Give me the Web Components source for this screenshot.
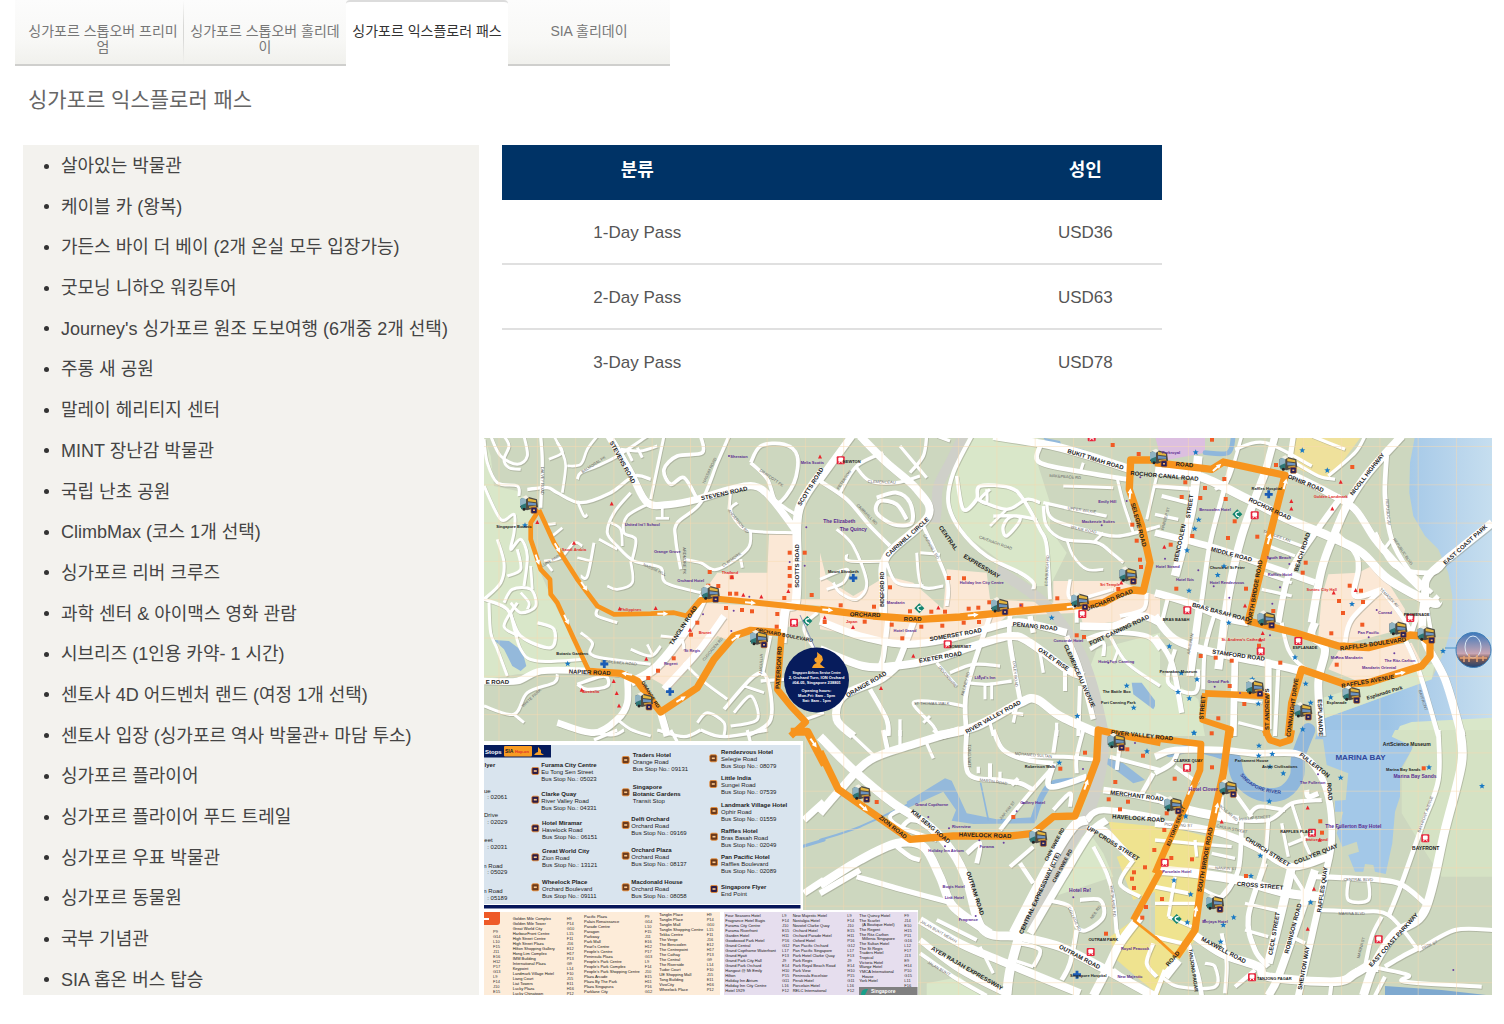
<!DOCTYPE html>
<html lang="ko">
<head>
<meta charset="utf-8">
<meta name="viewport" content="width=device-width, initial-scale=1">
<title>싱가포르 익스플로러 패스</title>
<style>
body { margin: 0; background: #fff; color: #444; font-family: "Liberation Sans", "Noto Sans CJK KR", sans-serif; }
</style>
</head>
<body>
<explorer-page></explorer-page>

<script>
const define = (name, html, init) => {
  const template = document.createElement('template');
  template.innerHTML = html;
  customElements.define(name, class extends HTMLElement {
    constructor() {
      super();
      this.attachShadow({ mode: 'open' }).append(template.content.cloneNode(true));
    }
    connectedCallback() { if (init) init(this.shadowRoot, this); }
  });
};

/* ---------- tabs ---------- */
define('tab-link', `
<style>
:host { display: block; flex: 0 0 162px; box-sizing: border-box; border-bottom: 2px solid #cfcfcd; }
:host([divided]) { background: linear-gradient(#0000, #d8d8d6 40%, #d8d8d6 60%, #0000) right / 1px 100% no-repeat; }
:host([current]) { background: #fff; border-top: 2px solid #dcdcdc; border-bottom-color: #fff; border-radius: 4px 4px 0 0; }
a { display: block; padding: 23px 5px 0; font-size: 14px; line-height: 16px; color: #777; text-align: center; text-decoration: none; }
:host([current]) a { color: #333; padding-top: 21px; }
</style>
<a href="#"><slot></slot></a>`, (root, host) => {
  if (host.hasAttribute('current')) root.querySelector('a').setAttribute('aria-current', 'page');
});

define('tab-strip', `
<style>
:host { display: block; padding-left: 15px; }
nav { display: flex; width: fit-content; height: 66px; background: linear-gradient(#fcfcfc, #f8f8f6 60%, #f0f0ec); }
nav::before { content: ""; flex: 0 0 7px; box-sizing: border-box; border-bottom: 2px solid #cfcfcd; }
</style>
<nav aria-label="패키지"><slot></slot></nav>`);

/* ---------- attraction list ---------- */
define('attraction-list', `
<style>
:host { display: block; background: #f3f2ee; }
ul { display: flex; flex-direction: column; justify-content: space-between; box-sizing: border-box; height: 100%; margin: 0; padding: 8px 0 2px 38px; list-style: none; }
li { display: flex; align-items: center; font-size: 18px; line-height: 26px; color: #444; }
li::before { content: ""; width: 5px; height: 5px; border-radius: 50%; background: #333; margin: 0 12px 0 -17px; }
</style>
<ul></ul>`, root => {
  const items = ['살아있는 박물관', '케이블 카 (왕복)', '가든스 바이 더 베이 (2개 온실 모두 입장가능)', '굿모닝 니하오 워킹투어',
    "Journey's 싱가포르 원조 도보여행 (6개중 2개 선택)", '주롱 새 공원', '말레이 헤리티지 센터', 'MINT 장난감 박물관', '국립 난초 공원',
    'ClimbMax (코스 1개 선택)', '싱가포르 리버 크루즈', '과학 센터 & 아이맥스 영화 관람', '시브리즈 (1인용 카약- 1 시간)',
    '센토사 4D 어드벤처 랜드 (여정 1개 선택)', '센토사 입장 (싱가포르 역사 박물관+ 마담 투소)', '싱가포르 플라이어',
    '싱가포르 플라이어 푸드 트레일', '싱가포르 우표 박물관', '싱가포르 동물원', '국부 기념관', 'SIA 홉온 버스 탑승'];
  root.querySelector('ul').replaceChildren(...items.map(t => {
    const li = document.createElement('li');
    li.textContent = t;
    return li;
  }));
});

/* ---------- price table ---------- */
define('price-table', `
<style>
:host { display: block; max-width: 660px; }
table { width: 100%; border-collapse: separate; border-spacing: 0; table-layout: fixed; text-align: center; font-size: 17px; color: #555; }
th, td { box-sizing: border-box; padding: 0; }
th { height: 55px; padding-bottom: 9px; background: #003366; color: #fff; font-size: 18px; }
td { height: 65px; padding-top: 2px; border-bottom: 2px solid #e0e0e0; }
tr:last-child td { border-bottom-color: transparent; }
th:first-child { width: 41%; }
th:last-child, td:last-child { padding-left: 236px; }
</style>
<table>
<thead><tr><th scope="col">분류</th><th scope="col">성인</th></tr></thead>
<tbody>
<tr><td>1-Day Pass</td><td>USD36</td></tr>
<tr><td>2-Day Pass</td><td>USD63</td></tr>
<tr><td>3-Day Pass</td><td>USD78</td></tr>
</tbody>
</table>`);

/* ---------- city map ---------- */
/* Each sheet is surveyed at three units per map pixel, from its own origin. */
const SHEETS = { A: [484, 436], B: [820, 436], C: [1155, 436], D: [484, 730], E: [820, 730], F: [1155, 730] };
const place = (s, x, y) => [SHEETS[s][0] + x / 3, SHEETS[s][1] + y / 3];
const r1 = n => Math.round(n * 10) / 10;
const points = (s, str) => str.trim().split(/\s+/).map(p => place(s, ...p.split(',').map(Number)));
const line = pts => 'M' + pts.map(p => p.map(r1).join(',')).join('L');
const curve = pts => {
  let d = 'M' + pts[0].map(r1).join(',');
  for (let i = 0; i < pts.length - 1; i++) {
    const a = pts[i - 1] || pts[i], b = pts[i], c = pts[i + 1], e = pts[i + 2] || c;
    d += 'C' + [b[0] + (c[0] - a[0]) / 6, b[1] + (c[1] - a[1]) / 6, c[0] - (e[0] - b[0]) / 6, c[1] - (e[1] - b[1]) / 6, c[0], c[1]].map(r1).join(' ');
  }
  return d;
};

const AREAS = [
  ['A', '#d9e7c9', '0,0 20,60 30,150 100,165 160,225 135,290 165,400 200,480 240,560 300,650 320,700 100,715 0,730'],
  ['A', '#94b9db', '30,612 75,615 115,645 127,690 110,705 85,690 60,640'],
  ['A', '#fbe8d6', '855,295 930,295 945,490 1020,490 1020,510 650,480 700,410 850,410'],
  ['A', '#fbe8d6', '650,500 1020,520 900,580 790,580 740,615 700,600 560,760 490,720 560,640'],
  ['B', '#d9e7c9', '430,0 655,0 655,90 690,200 690,280 740,350 690,450 640,450 560,390 440,300 380,200 400,120'],
  ['B', '#d9e7c9', '830,640 1020,590 1020,900 850,900 800,720'],
  ['B', '#fbe8d6', '0,480 0,350 20,430 100,480 200,420 280,440 370,520 380,400 500,410 510,490 700,500 700,435 900,435 980,470 1020,480 1020,540 860,560 790,570 780,530 560,540 490,600 270,620 0,580'],
  ['B', '#94b9db', '935,740 965,740 1010,800 1000,820 940,775'],
  ['B', '#94b9db', '670,5 720,15 725,30 680,20'],
  ['B', '#94b9db', '750,30 795,42 790,55 745,42'],
  ['C', 'url(#sea)', '780,0 765,80 763,170 775,240 810,300 850,340 880,410 892,480 892,560 870,640 830,730 500,850 480,910 800,910 1012,850 1012,0'],
  ['C', '#efe19c', '425,0 620,0 560,80 520,130 400,90'],
  ['C', '#dcbfe0', '0,0 150,0 150,50 20,75'],
  ['C', '#fbe8d6', '520,415 610,410 650,390 700,440 750,520 740,580 570,625 490,600 500,480'],
  ['C', '#fbe8d6', '550,645 770,620 800,680 620,740 520,700'],
  ['C', '#d9e7c9', '0,700 130,790 150,900 0,900'],
  ['C', '#d9e7c9', '490,790 840,680 830,730 500,850'],
  ['C', '#d9e7c9', '720,900 735,870 770,858 1012,845 1012,900'],
  ['F', '#a3c8e8', '500,0 515,105 580,130 572,210 540,212 540,245 565,245 545,310 562,350 605,335 612,365 580,375 600,425 625,425 630,402 655,405 660,425 692,432 712,340 720,245 735,200 735,120 770,60 775,30 710,20 720,0'],
  ['F', '#d5e2c4', '720,0 1012,0 1012,440 860,440 820,380 740,250 740,120 775,50 710,20'],
  ['F', '#efe38f', '0,290 80,300 160,320 150,400 130,620 70,690 0,797'],
  ['E', '#efe38f', '865,275 1020,290 1020,480 940,510 890,380 930,370 880,320'],
  ['E', '#efe38f', '940,570 1020,640 1020,797 960,750 890,690 870,620'],
  ['E', '#d9e7c9', '760,330 810,310 850,370 880,440 760,480 700,500 760,420'],
  ['E', '#d9e7c9', '320,760 420,740 480,797 320,797'],
  ['E', '#94b9db', '260,215 375,145 395,152 440,250 530,268 640,262 645,280 460,282 395,272 408,240 370,185 262,235'],
  ['E', '#94b9db', '850,80 910,100 975,150 940,160 900,130 850,95'],
  ['F', '#7fa9cf', '690,768 860,780 1012,797 690,797']
];
const WATER = [
  ['E', 6, '0,330 120,290 260,225'], ['E', 5, '482,160 505,270'], ['E', 18, '640,268 665,200 700,160 780,150'],
  ['F', 42, '238,90 250,140 290,180 340,195 390,185 425,140 430,80 460,0'], ['F', 24, '45,70 120,55 230,85'], ['D', 10, '960,348 1020,330'],
  ['C', 14, '150,50 220,50 235,0']
];
const HIGHWAY = [
  ['B', 30, '430,0 390,80 355,150 350,220 345,260'], ['B', 32, '530,400 590,440 640,475 700,530 780,650 820,760 850,890'],
  ['E', 34, '855,0 840,130 800,260 730,380 620,590']
];
/* sheet, stroke width, course */
const ROADS = [
  ['A', 22, '375,0 440,110 490,200 560,205 640,190 740,160 810,150 860,185 940,290'], ['A', 26, '1020,100 945,220 940,380 935,500 905,520 895,620'],
  ['A', 20, '0,735 100,735 170,705 310,705 420,715'], ['A', 26, '440,740 520,690 620,560 660,480'], ['A', 20, '540,760 640,650 720,540'],
  ['A', 9, '20,0 50,60 100,85 130,60 120,0'], ['A', 9, '0,10 10,80 40,140 100,150 105,180'], ['A', 9, '60,0 75,30 60,70 75,95 110,100'],
  ['A', 10, '170,0 175,80 170,215'], ['A', 10, '130,160 190,155 220,170 290,200 380,170 450,120 500,130'],
  ['A', 8, '210,0 235,50 245,90 235,170'], ['A', 8, '195,70 235,50 220,20'], ['A', 8, '250,90 290,85 310,40 340,0'],
  ['A', 9, '490,0 400,60 340,90 290,110 280,130'], ['A', 9, '460,35 475,65'], ['A', 9, '430,45 445,75'], ['A', 8, '280,195 300,240 310,235'],
  ['A', 9, '540,0 500,190'], ['A', 8, '535,205 535,245'], ['A', 8, '515,247 555,247'], ['A', 9, '410,40 470,45 520,30'],
  ['A', 10, '735,0 700,80 650,200 580,260 575,310 590,400'], ['A', 11, '650,0 655,50 580,60 540,100 560,145 600,125 640,190'],
  ['A', 11, '800,80 830,30 900,25 940,60 930,140 880,200 850,130 800,80'], ['A', 9, '760,200 740,220 760,260 800,285 930,290'],
  ['A', 9, '800,285 790,340 700,400 650,380 600,370'], ['A', 9, '770,370 775,395'], ['A', 10, '840,170 910,220 945,240'], ['A', 9, '740,160 735,220'],
  ['A', 9, '440,170 390,230 370,290 400,330 450,375 530,395 545,440 650,470'], ['A', 8, '440,375 445,440 400,460 370,450'], ['A', 9, '500,200 430,240 420,290 455,310 445,370'],
  ['A', 8, '345,310 400,340'], ['A', 8, '380,260 410,280 415,330'], ['A', 9, '330,320 310,420 290,420'], ['A', 8, '280,365 320,375'], ['A', 8, '180,375 230,365 270,320 295,330'],
  ['A', 8, '190,265 215,262'], ['A', 8, '205,300 235,275'], ['A', 8, '190,385 205,405'], ['A', 9, '340,520 340,540 400,560'],
  ['A', 10, '0,490 70,520 110,600 200,635 210,580 160,560'], ['A', 9, '60,500 85,460 140,460 155,510 110,530 80,500'], ['A', 8, '110,470 135,500 130,520'],
  ['A', 9, '40,310 60,380 50,440 0,490'], ['A', 9, '0,150 50,250 90,235 90,290 80,340 110,310 130,360 120,450'], ['A', 9, '70,420 110,400 100,340'], ['A', 8, '140,390 145,460'],
  ['A', 9, '100,500 60,570 105,600'], ['A', 9, '15,500 20,590 40,640 70,720'], ['A', 9, '80,530 110,640 160,675 300,670'], ['A', 9, '290,590 325,620 330,660 500,685'],
  ['A', 9, '440,640 500,660 530,630'], ['A', 8, '490,625 505,655'], ['A', 9, '530,600 590,610 600,640'], ['A', 9, '220,715 210,740 130,770 90,835 0,810'], ['A', 9, '90,835 120,860'],
  ['A', 10, '280,745 360,720 370,750 310,760 280,745'], ['A', 20, '430,720 430,800 400,850 330,890 220,860'], ['A', 9, '400,850 440,880 500,900'], ['A', 22, '530,830 550,900'],
  ['A', 9, '600,680 650,730 730,790'], ['A', 11, '720,820 810,720 850,730 860,850 790,900'], ['A', 9, '640,860 670,830 720,860 720,900'], ['A', 9, '750,830 800,780 820,850 740,870'], ['A', 8, '780,750 840,770'],
  ['A', 10, '900,730 830,735'], ['A', 9, '860,600 835,720'], ['A', 9, '965,850 1020,830'], ['A', 10, '1000,530 960,580 1020,680'],
  ['B', 22, '95,0 0,130'], ['B', 24, '120,0 200,80 290,160 325,240 200,360 190,460 190,540'], ['B', 10, '240,30 320,125'], ['B', 10, '190,50 110,90 60,170'], ['B', 10, '110,95 150,135 230,140 300,120'],
  ['B', 10, '320,0 310,60 270,110'], ['B', 10, '350,0 390,15'], ['B', 12, '0,135 80,190 150,270 210,330'], ['B', 12, '170,185 230,170 270,200 275,260 220,265 170,230 180,195 230,205 260,250'],
  ['B', 12, '455,0 400,110 385,200 420,280 500,360 600,410 640,440 640,460'], ['B', 11, '310,270 380,430 380,510'], ['B', 9, '300,350 360,355'], ['B', 9, '290,350 305,450 370,450'],
  ['B', 10, '200,380 230,440 310,450'], ['B', 9, '50,280 100,330 140,440 110,490 60,470 40,440'], ['B', 9, '80,355 90,375 200,375'], ['B', 9, '0,430 80,400 70,440 20,460'],
  ['B', 11, '410,120 430,220 470,190 480,150 570,155 610,190 660,280 680,330 690,490'], ['B', 9, '510,160 480,190 500,200 500,160'], ['B', 10, '470,190 560,220 620,190 660,200'],
  ['B', 10, '520,240 600,245 560,300 550,270 580,240 650,250'], ['B', 8, '510,270 560,220'], ['B', 10, '670,200 760,220 860,240'], ['B', 10, '680,200 700,250 830,290 900,300 1020,270'],
  ['B', 10, '670,210 680,270 730,310 830,320 880,355 910,380'], ['B', 8, '740,310 760,360 800,400 850,400'], ['B', 8, '820,320 850,290'], ['B', 24, '520,0 700,30 840,70 930,100'],
  ['B', 14, '660,30 660,80 800,110 920,130'], ['B', 9, '790,80 780,110'], ['B', 9, '730,150 880,155'], ['B', 9, '890,120 910,200 940,290'], ['B', 9, '1010,120 980,250'],
  ['B', 22, '0,555 120,600 260,625 400,605 570,560 640,565 740,590'], ['B', 24, '0,640 130,690 220,690 340,670 460,630 570,600 630,620 740,700 790,720'],
  ['B', 24, '230,690 180,730 70,780 50,850 100,900'], ['B', 18, '285,545 250,640 230,690'], ['B', 16, '205,540 190,660 180,690'],
  ['B', 26, '350,900 470,870 600,800 650,790 720,840 830,890'], ['B', 14, '510,540 440,760 440,900'], ['B', 14, '570,540 570,620 600,790'], ['B', 10, '350,680 410,750'],
  ['B', 10, '390,710 460,685 540,690'], ['B', 10, '440,740 500,745 575,735'], ['B', 9, '495,745 495,790'], ['B', 9, '515,740 515,790'], ['B', 10, '430,810 370,800 280,800 340,870 355,900'], ['B', 9, '310,860 330,840'],
  ['B', 14, '150,760 200,850 205,900'], ['B', 10, '240,850 240,900'], ['B', 10, '590,810 580,860'], ['B', 10, '575,830 610,835'], ['B', 10, '510,860 520,900'],
  ['B', 10, '660,650 670,710'], ['B', 12, '735,700 735,765'], ['B', 16, '740,600 780,700 820,850'], ['B', 22, '780,570 880,570 960,540 1020,560'], ['B', 12, '980,470 970,520 900,540'],
  ['B', 14, '800,610 870,590 980,600 1020,640'], ['B', 12, '810,640 850,620 850,660'], ['B', 10, '870,600 920,680 1020,750'], ['B', 12, '780,750 775,900'], ['B', 8, '880,680 895,640'],
  ['B', 16, '630,540 640,590'], ['B', 12, '770,500 770,560'], ['B', 10, '750,430 755,490 880,460'], ['B', 10, '710,860 710,900'],
  ['C', 26, '0,105 130,120 280,190 400,250 520,300 620,350 700,430 830,500 850,490'], ['C', 24, '740,0 640,110 580,200 540,290 500,400 470,560'], ['C', 24, '330,110 260,300 220,480 190,700'],
  ['C', 14, '230,80 170,300 150,420 110,720'], ['C', 26, '130,60 110,220 60,420'], ['C', 22, '400,110 520,170 600,220 660,310 730,390 800,460'], ['C', 20, '0,290 160,330 310,380 480,440'],
  ['C', 18, '560,180 460,320 400,420 370,560'], ['C', 12, '0,150 130,160'], ['C', 12, '20,180 100,200'], ['C', 10, '0,235 70,250'], ['C', 22, '0,470 100,500 210,545 280,560'],
  ['C', 24, '0,540 60,610 180,650 330,680 440,705'], ['C', 16, '0,600 50,680 80,830'], ['C', 12, '60,640 40,740 120,770 130,700'], ['C', 12, '40,480 20,560'], ['C', 12, '130,500 100,720'],
  ['C', 12, '180,530 150,640 145,760'], ['C', 20, '240,660 235,900'], ['C', 20, '340,690 340,880'], ['C', 10, '260,0 220,130 180,160'], ['C', 22, '360,0 330,110'], ['C', 16, '415,0 400,100'],
  ['C', 10, '420,80 490,120 540,130'], ['C', 10, '470,0 570,40'], ['C', 10, '520,120 600,50 630,0'], ['C', 10, '240,40 330,20 470,90'], ['C', 10, '330,290 440,330'], ['C', 10, '340,330 420,360'], ['C', 10, '320,410 410,440'], ['C', 10, '320,460 410,480'],
  ['C', 14, '695,60 690,180 710,310 760,400 830,470'], ['C', 14, '660,290 720,390 830,410 870,380'], ['C', 24, '1012,260 900,350 820,420 810,480 805,600 870,730 920,900'],
  ['C', 14, '850,480 790,540 770,590'], ['C', 12, '830,410 810,460 830,600'], ['C', 16, '540,290 600,350 610,400 600,480 680,460'], ['C', 14, '680,460 590,550 570,620'], ['C', 14, '680,460 740,540 770,590'],
  ['C', 24, '480,560 470,600 510,640 490,740 500,900'], ['C', 14, '740,590 790,700 850,900'], ['C', 10, '710,310 680,350'], ['C', 12, '370,700 360,900'], ['C', 10, '240,790 320,800'], ['C', 10, '250,860 330,880'], ['C', 12, '500,720 440,690 400,640 380,560'],
  ['D', 9, '270,0 380,15 420,0'], ['D', 10, '520,0 600,20 650,0'], ['D', 10, '560,0 580,35'], ['D', 10, '650,0 720,20 850,0'], ['D', 10, '790,0 800,40'], ['D', 10, '330,30 400,0'], ['D', 20, '960,270 1020,215'], ['D', 20, '960,490 1020,450'],
  ['E', 26, '0,20 100,120 220,220 330,290 400,370 440,450 490,600 600,620 720,650 840,710 1000,797'], ['E', 24, '0,250 60,180 150,90 290,40 420,0'], ['E', 26, '0,465 120,390 230,340 310,350 360,440 400,530 510,610'],
  ['E', 18, '0,490 120,420'], ['E', 16, '110,440 250,480 400,520'], ['E', 10, '80,0 160,75'], ['E', 14, '190,0 205,70'], ['E', 10, '240,0 240,60'], ['E', 10, '320,40 340,85'], ['E', 10, '340,0 360,20'],
  ['E', 14, '440,0 445,130 540,150 600,160 640,180'], ['E', 10, '475,130 475,110'], ['E', 12, '510,150 510,100'], ['E', 10, '540,150 540,125'], ['E', 12, '575,165 595,145'], ['E', 14, '520,0 550,60 620,90 700,100'],
  ['E', 12, '540,300 620,200 700,110'], ['E', 12, '700,240 750,190 750,230'], ['E', 18, '700,100 690,170 800,140'], ['E', 12, '710,0 700,70'], ['E', 12, '600,80 730,80 830,90'], ['E', 12, '790,0 770,80 770,130'],
  ['E', 12, '240,240 210,260 240,290 350,330'], ['E', 14, '240,300 270,270 320,280'], ['E', 14, '440,370 480,340 470,400'], ['E', 14, '230,350 270,380 300,390'], ['E', 12, '570,410 640,350'], ['E', 14, '600,400 640,460'],
  ['E', 28, '580,610 690,400 760,290 800,270'], ['E', 22, '630,610 730,440 810,310 860,270'], ['E', 28, '600,610 570,720 560,797'], ['E', 20, '850,180 920,190 1020,210'], ['E', 20, '800,270 850,240 1020,265'],
  ['E', 22, '800,300 850,300 900,350 940,390'], ['E', 12, '940,390 900,460 960,500'], ['E', 12, '820,350 860,430 880,500 890,610'], ['E', 12, '680,510 750,530 770,590 800,600 850,560 840,510 780,510'], ['E', 14, '770,600 750,700 725,750'],
  ['E', 26, '960,560 900,640 860,720 820,797'], ['E', 24, '300,570 420,640 560,700 780,790'], ['E', 18, '300,630 420,720 570,797'], ['E', 12, '300,670 400,740 500,797'], ['E', 10, '480,650 520,730'], ['E', 12, '600,640 660,660 640,710'], ['E', 10, '580,690 640,710'],
  ['E', 12, '350,570 470,630'], ['E', 12, '900,640 890,600'], ['E', 14, '880,720 960,780'], ['E', 12, '1000,640 980,700 1010,740'], ['E', 12, '900,40 890,120'], ['E', 12, '870,80 1020,120'], ['E', 14, '1000,130 960,200'],
  ['F', 26, '0,200 100,240 250,270'], ['F', 22, '0,280 100,290 200,310 300,350 410,410 520,380'], ['F', 20, '0,80 60,60 200,60 300,70 420,70 480,110 520,200 530,330 510,440 470,620 430,797'], ['F', 14, '0,130 50,100 70,60'], ['F', 12, '60,110 130,160'],
  ['F', 14, '260,270 250,420 200,500'], ['F', 12, '200,200 215,260 340,270 410,220 500,210'], ['F', 12, '280,260 310,230 390,240'], ['F', 12, '240,190 290,260'], ['F', 12, '340,270 330,380 310,450'], ['F', 10, '380,280 400,380'], ['F', 10, '410,220 450,340 480,400'], ['F', 10, '400,345 460,320'],
  ['F', 28, '0,420 120,430 250,450 400,490 500,500'], ['F', 26, '410,410 380,540 340,700'], ['F', 24, '480,420 430,570 370,740 340,797'], ['F', 16, '330,400 280,560 300,660 340,710'], ['F', 10, '270,520 380,545'], ['F', 10, '270,600 340,620'], ['F', 12, '410,620 450,640'], ['F', 12, '400,410 450,490'],
  ['F', 26, '110,610 200,670 310,710 340,740 540,755 600,730 650,700'], ['F', 14, '30,720 0,797'], ['F', 26, '70,690 30,740'], ['F', 14, '100,640 130,740 140,797'], ['F', 12, '200,610 215,700 210,790'], ['F', 10, '150,700 180,710 180,770 70,770 20,740'], ['F', 12, '240,770 300,720'],
  ['F', 16, '480,440 600,445 730,460 810,520'], ['F', 12, '480,540 600,545 700,555 790,660'], ['F', 10, '580,450 580,510 640,510 640,450'], ['F', 14, '700,560 740,460 800,290 850,150 850,0'], ['F', 26, '915,0 920,100 870,300 810,540 720,610 660,700 625,797'],
  ['F', 12, '680,560 650,620 630,710'], ['F', 12, '790,660 900,600 1012,600'], ['F', 14, '690,710 740,680 800,650'], ['F', 12, '650,710 760,735 750,755 980,770'], ['F', 12, '690,740 660,797'], ['F', 12, '530,755 525,797'], ['F', 12, '600,720 670,720'],
  ['F', 10, '0,330 110,340 230,350'], ['F', 10, '170,370 240,385'], ['F', 10, '160,410 230,420'], ['F', 12, '0,470 100,490'], ['F', 10, '0,520 120,520'], ['F', 10, '40,560 110,590'], ['F', 10, '130,470 200,500 240,450'], ['F', 12, '0,620 80,640'], ['F', 10, '120,330 125,380'], ['F', 10, '60,440 40,560'], ['F', 16, '455,180 460,200 490,190']
];
const ROUTES = [
  ['A', 14, '165,222 140,260 140,310 170,400 198,430 200,475 220,500 270,610 315,705'], ['A', 14, '165,222 210,320 280,430 340,510 390,535 500,533 570,530 610,540'],
  ['A', 22, '315,706 410,712 460,735 500,790 530,828 640,755 690,670 750,600 800,583 890,590'], ['A', 18, '610,540 650,492 700,488 800,498 1022,522'],
  ['A', 20, '893,590 880,760 920,810 965,858 920,900'],
  ['B', 22, '0,520 160,540 300,550 420,543 600,525 780,508 850,500 905,470 940,462 970,465 990,380 965,270 928,160 932,72 1022,72'],
  ['C', 22, '0,80 170,100 205,78 390,118 280,555 420,590 550,630 640,635 740,610 765,597 800,600 825,620 825,660 800,690 640,740 570,745 440,700 410,800 400,900'],
  ['C', 20, '150,772 335,780 335,900'], ['C', 18, '150,772 142,852 228,880 225,905'],
  ['D', 24, '920,5 970,5 1022,105'], ['E', 22, '0,65 55,178 130,230 270,328 400,318 570,318 640,310 700,260 765,258 800,170 830,90 835,0 930,20 1022,38'],
  ['F', 20, '0,25 138,42 135,120 90,230 30,360 0,430'], ['F', 22, '222,0 205,130 150,380 120,600 65,680'], ['F', 8, '65,680 0,620'], ['E', 20, '1022,420 940,570'], ['E', 8, '940,570 1022,635'],
  ['F', 20, '330,0 345,30 375,40 405,30 410,0']
];
/* sheet, x, y, angle, size, text */
const STREETS = [
  ['A',410,76,61,6,'STEVENS ROAD'],['A',722,178,-12,6,'STEVENS ROAD'],['A',985,155,-58,6,'SCOTTS ROAD'],['A',944,390,-90,6,'SCOTTS ROAD'],['A',603,572,-57,6,'TANGLIN ROAD'],['A',317,715,2,6,'NAPIER ROAD'],['A',40,743,0,6,'E ROAD'],['A',495,778,58,5,'ORANGE RD'],['A',900,602,11,5,'ORCHARD BOULEVARD'],['A',890,695,-87,6,'PATERSON RD'],
  ['B',266,308,-42,6,'CAIRNHILL CIRCLE'],['B',380,310,55,6,'CENTRAL'],['B',482,396,31,6,'EXPRESSWAY'],['B',192,460,-90,5,'BIDEFORD RD'],['B',135,542,2,6,'ORCHARD'],['B',278,555,0,6,'ROAD'],['B',408,602,-10,6,'SOMERSET ROAD'],['B',362,669,-10,6,'EXETER ROAD'],['B',645,577,6,6,'PENANG ROAD'],['B',697,674,35,6,'OXLEY RISE'],['B',773,722,66,6,'CLEMENCEAU AVENUE'],['B',900,588,-25,6,'FORT CANNING ROAD'],['B',142,750,-30,6,'ORANGE ROAD'],['B',522,848,-29,6,'RIVER VALLEY ROAD'],['B',825,76,17,6,'BUKIT TIMAH ROAD'],['B',950,268,75,6,'SELEGIE ROAD'],['B',870,498,-22,6,'ORCHARD ROAD'],
  ['C',88,92,4,6,'ROAD'],['C',28,120,5,6,'ROCHOR CANAL ROAD'],['C',450,148,22,6,'OPHIR ROAD'],['C',342,224,25,6,'ROCHOR ROAD'],['C',80,322,-78,6,'BENCOOLEN'],['C',110,212,-82,6,'STREET'],['C',447,350,-72,6,'BEACH ROAD'],['C',641,118,-52,6,'NICOLL HIGHWAY'],['C',228,361,15,6,'MIDDLE ROAD'],['C',196,535,15,6,'BRAS BASAH ROAD'],['C',305,470,-80,6,'NORTH BRIDGE ROAD'],['C',655,630,-8,6,'RAFFLES BOULEVARD'],['C',640,742,-10,6,'RAFFLES AVENUE'],['C',250,664,8,6,'STAMFORD ROAD'],['C',935,330,-42,6,'EAST COAST PARK'],['C',418,815,-82,6,'CONNAUGHT DRIVE'],['C',341,820,-90,6,"ST ANDREW'S"],['C',490,845,88,6,'ESPLANADE'],['C',690,775,-17,5,'Esplanade Park'],['C',148,815,-85,6,'STREET'],
  ['E',328,294,40,6,'KIM SENG ROAD'],['E',215,296,38,6,'ZION ROAD'],['E',495,322,2,6,'HAVELOCK ROAD'],['E',460,492,72,6,'OUTRAM ROAD'],['E',664,492,-65,6,'CENTRAL EXPRESSWAY (CTE)'],['E',708,346,-62,5,'CHIN SWEE RD'],['E',731,410,-62,5,'CHIN SWEE RD'],['E',876,345,32,6,'UPP CROSS STREET'],['E',776,686,28,6,'OUTRAM ROAD'],['E',438,720,30,6,'AYER RAJAH EXPRESSWAY'],['E',950,203,7,6,'MERCHANT ROAD'],['E',955,271,4,6,'HAVELOCK ROAD'],['E',965,22,6,6,'RIVER VALLEY ROAD'],
  ['F',475,110,38,6,'FULLERTON'],['F',518,185,85,6,'ROAD'],['F',335,370,32,6,'CHURCH STREET'],['F',315,473,5,6,'CROSS STREET'],['F',485,378,-22,6,'COLLYER QUAY'],['F',508,480,-82,6,'RAFFLES QUAY'],['F',420,597,-75,6,'ROBINSON ROAD'],['F',363,612,-80,6,'CECIL STREET'],['F',452,715,-80,6,'SHENTON WAY'],['F',203,666,28,6,'MAXWELL ROAD'],['F',156,390,-80,6,'SOUTH BRIDGE ROAD'],['F',55,290,-68,5,'EU TONG SEN ST'],['F',720,634,-48,6,'EAST COAST PARKWAY'],['F',122,722,82,5,'TANJONG PAGAR'],['F',58,690,-50,6,'ROAD']
];
const LANES = [['A',170,130,90,'DALVEY ROAD'],['A',355,85,-33,'BALMORAL PK'],['A',680,125,-65,'NASSIM ROAD'],['A',200,375,-30,'CLUNY PARK'],['A',510,400,25,'NASSIM HILL'],['A',590,370,90,'ARDMORE PK'],['A',760,255,50,'ANDERSON RD'],['A',745,370,-35,'CLAYMORE'],['A',405,680,5,'MIDDLESEX ROAD'],['A',145,785,-42,'WHITE PARK'],['A',860,125,35,'DRAYCOTT PK'],['A',635,620,-50,'CUSCADEN RD'],['A',835,680,-88,'ANGULLIA'],['B',185,138,2,'CLEMENCEAU'],['B',120,240,45,'CAIRNHILL RD'],['B',75,130,-55,'PETERSON'],['B',330,330,60,'CAIRNHILL RD'],['B',525,380,20,'CAVENAGH ROAD'],['B',685,400,-87,'EDINBURGH RD'],['B',785,222,8,'UPPER WILKIE'],['B',790,275,12,'WILKIE ROAD'],['B',735,98,4,'MAKEPEACE RD'],['B',380,715,50,'DEVONSHIRE'],['B',440,740,-75,'KILLINEY RD'],['B',335,802,0,'ST THOMAS WALK'],['B',582,710,85,'OXLEY ROAD'],['C',35,245,-75,'PRINSEP ST'],['C',400,300,20,'TAN QUEE LAN'],['C',695,225,86,'REPUBLIC AV'],['C',740,345,55,'REPUBLIC BLVD'],['C',700,490,45,'TEMASEK AV'],['C',110,620,-80,'ARMENIAN'],['C',800,790,72,'BAYFRONT'],['E',445,75,90,'TONG WATT'],['E',520,155,8,'MARTIN ROAD'],['E',565,240,-52,'JIAK KIM ST'],['E',640,75,5,'MOHAMED SULTAN'],['E',875,510,84,'KRETA AYER RD'],['E',390,610,30,'JALAN BUKIT MERAH'],['E',760,565,65,'COLLEGE RD'],['E',355,715,30,'JALAN BUKIT'],['E',830,545,-55,'NEIL RD'],['F',610,450,0,'CENTRAL BLVD'],['F',590,550,0,'MARINA BLVD'],['F',815,250,-70,'BAYFRONT AVENUE'],['F',820,645,-25,'PARK ST'],['F',230,315,12,'CHULIA STREET'],['F',300,270,-5,'PHILLIP STREET'],['F',255,220,40,'CIRCULAR RD'],['F',640,650,-75,'MARINA ST'],['F',70,285,3,'PICKERING ST'],['F',200,415,3,'NANKIN ST']];
/* sheet, x, y, colour key, text, size */
const PLACES = [
  ['B',58,255,'p','The Elizabeth',5],['B',100,280,'p','The Quincy',5],['A',765,62,'p','Sheraton',4],['A',985,108,'p','Melia Scotts',4],['A',475,265,'p','United Int’l School',4],['A',550,345,'p','Orange Grove',4],['A',620,433,'p','Orchard Hotel',4],['A',560,682,'p','Regent',4],['A',625,625,'p','St Regis',4],['B',485,434,'p','Holiday Inn City Centre',4],['B',215,500,'p','Mandarin',4],['B',862,195,'p','Emily Hill',4],['B',835,255,'p','Mackenzie Suites',4],['B',745,618,'p','Concorde Hotel',4],['B',835,675,'p','Hotel Fort Canning',4],['B',495,725,'p','Lloyd’s Inn',4],['B',255,582,'p','Hotel Grand',4],
  ['C',48,48,'p','Parkroyal',4],['C',395,365,'p','South Beach',4],['C',375,415,'p','Raffles Hotel',4],['C',222,440,'p','Hotel Rendezvous',4],['C',690,528,'p','Conrad',4],['C',640,590,'p','Pan Pacific',4],['C',575,665,'p','Marina Mandarin',4],['C',735,672,'p','The Ritz-Carlton',4],['C',672,695,'p','Mandarin Oriental',4],['C',180,220,'p','Bencoolen Hotel',4],['C',190,735,'p','Grand Park',4],['C',90,430,'p','Hotel Ibis',4],['C',38,385,'p','Hotel Strand',4],
  ['E',335,242,'p','Grand Copthorne',4],['E',418,296,'p','Riverview',4],['E',378,360,'p','Holiday Inn Atrium',4],['E',500,350,'p','Furama',4],['E',407,468,'p','Bugis Hotel',4],['E',427,503,'p','Link Hotel',4],['E',445,550,'p','Fragrance',4],['E',780,482,'p','Hotel Re!',5],['E',638,217,'p','Gallery Hotel',4],['E',930,740,'p','New Majestic',4],['E',945,655,'p','Royal Peacock',4],
  ['F',780,138,'p','Marina Bay Sands',5],['F',595,290,'p','The Fullerton Bay Hotel',5],['F',145,178,'p','Hotel Clover',5],['F',65,425,'p','Porcelain Hotel',4],['F',180,575,'p','Berjaya Hotel',4],['F',485,150,'p','The Fullerton',4],
  ['F',755,42,'k','ArtScience Museum',5],['F',745,118,'k','Marina Bay Sands',4],['F',812,355,'k','BAYFRONT',5],['F',358,745,'k','TANJONG PAGAR',4],['C',335,158,'k','Raffles Hospital',4],['C',545,800,'k','Esplanade',4],['C',785,535,'k','PROMENADE',4],['C',450,635,'k','ESPLANADE',4],['C',75,550,'k','BRAS BASAH',4],['B',95,75,'k','NEWTON',4],['B',420,630,'k','SOMERSET',4],['B',890,765,'k','The Battle Box',4],['B',895,800,'k','Fort Canning Park',4],['B',70,405,'k','Mount Elizabeth',4],['A',90,270,'k','Singapore Botanic',4],['A',265,652,'k','Botanic Gardens',4],['F',425,305,'k','RAFFLES PLACE',4],['E',660,108,'k','Robertson Walk',4],['E',805,735,'k','Singapore Hospital',4],['E',850,670,'k','OUTRAM PARK',4],['F',380,110,'k','Asian Civilisations',4],['F',290,110,'k','Parliament House',4],['C',70,705,'k','Peranakan Museum',4],['C',265,395,'k','Church of St Peter',4],['F',100,92,'k','CLARKE QUAY',4],
  ['C',545,158,'r','Golden Landmark',4],['C',500,460,'r','Suntec City Hall',4],['C',265,610,'r','St. Andrew’s Cathedral',4],['A',440,520,'r','Philippines',4],['A',320,765,'r','Australia',4],['A',270,340,'r','Saudi Arabia',4],['A',645,588,'r','Brunei',4],['A',738,410,'r','Thailand',4],['B',95,555,'r','Japan',4],['B',870,445,'r','Sri Temple',4],['F',485,340,'r','Switzerland',4]
];
const MARKS = {
  sq: { A:'677,408 673,449 703,450 743,424 738,473 757,473 917,350 962,350 917,396 917,420 917,449 901,486 983,477 726,516 774,522 804,526 880,534 878,572 640,560 621,596 569,667 522,704 493,726', B:'62,508 210,454 162,512 270,526 334,527 375,527 386,426 432,427 446,518 475,515 508,499 604,508 712,487 14,558 134,557 215,566 304,572 367,569 431,560 477,558 247,607 770,598 792,603 937,266 950,314 960,371 963,393 895,459 878,27 956,54', C:'171,11 363,87 592,93 208,129 91,139 150,156 136,186 212,189 80,183 239,256 112,300 307,302 219,306 47,326 452,380 443,410 64,458 273,458 584,449 618,464 552,495 564,531 624,498 529,592 622,566 545,686 355,525 312,629 376,680 230,674 137,660 182,665 224,750 268,804 190,847', E:'795,68 721,116 580,261 170,216 886,156 866,208 924,215 900,238 922,58 969,77 1003,360 975,412 942,427 936,446 942,474 978,531 967,563 858,611', F:'170,10 171,112 59,146 35,250 28,300 49,384 111,388 21,507 496,274 501,308 273,438 806,115' },
  tri: { A:'1008,62 383,203 160,259 270,321 407,518 515,517 487,669 389,736 293,762 398,772 405,809 618,582 778,477 832,482 913,466 744,423', B:'99,574 280,660 183,757 904,440 14,545 355,515', C:'409,196 409,218 532,218 557,138 28,333 270,509 536,470 602,463 323,592 316,611', F:'200,275 458,233 494,330 477,477 458,597' },
  star: { A:'123,268 251,683', B:'695,545 920,749 941,815 772,840', C:'442,43 122,49 517,103 131,251 119,278 96,343 207,391 188,417 102,464 221,560 591,504 43,631 79,711 420,664 864,645 126,730 69,768 103,787 292,730 452,743 467,800 527,784 310,803 117,891 443,880', E:'718,98 981,64', F:'117,8 312,47 352,72 311,77 345,110 385,130 343,214 557,143 822,112 981,168 92,259 316,377 288,438 467,517 57,451 107,493 97,577 205,585 236,562 197,635' },
  dot: { A:'735,60 967,274 917,378 962,389 796,482 749,524 742,585 657,535', B:'479,721 845,268 920,195 961,124 865,680 602,508', C:'30,368 130,403 176,451 223,485 375,454 403,384 345,368 352,503 546,663 718,652 665,522 641,604 345,598 179,752 255,771', E:'325,261 387,295 478,331 551,338 375,349 590,244 610,219 760,502 467,558 789,117 945,39', F:'550,295 489,133 150,571 895,720' },
  mrt: { A:'930,560', B:'62,73 383,625 787,534 815,4', C:'299,238 97,523 430,615 766,546 317,646', E:'812,666', F:'96,113 29,398 471,308 811,325 671,628 291,742' },
  plus: { A:'361,684 558,767', B:'100,426', C:'341,175', E:'771,734' },
  info: { A:'970,555', B:'298,517', C:'247,235', F:'65,567' },
  bus: { A:'135,205 680,472 480,795 825,608', B:'540,510 780,495 925,418', C:'12,65 400,85 335,550 730,578 815,595 590,775 300,755 445,825', E:'125,190 655,322 890,35', F:'55,225 220,175 180,520' }
};
const STOPS = [
  [172,112,154,123,'Furama City Centre','Eu Tong Sen Street','Bus Stop No.: 05023'],[172,198,154,209,'Clarke Quay','River Valley Road','Bus Stop No.: 04331'],[174,284,154,295,'Hotel Miramar','Havelock Road','Bus Stop No.: 06151'],[174,370,154,382,'Great World City','Zion Road','Bus Stop No.: 13121'],[174,461,154,472,'Wheelock Place','Orchard Boulevard','Bus Stop No.: 09111'],
  [446,80,425,90,'Traders Hotel','Orange Road','Bus Stop No.: 09131'],[446,176,425,187,'Singapore','*Botanic Gardens','Transit Stop'],[442,274,425,285,'Delfi Orchard','Orchard Road','Bus Stop No.: 09169'],[442,366,425,377,'Orchard Plaza','Orchard Road','Bus Stop No.: 08137'],[442,461,425,472,'Macdonald House','Orchard Road','Bus Stop No.: 08058'],
  [711,72,688,85,'Rendezvous Hotel','Selegie Road','Bus Stop No.: 08079'],[711,151,688,162,'Little India','Sungei Road','Bus Stop No.: 07539'],[711,230,690,243,'Landmark Village Hotel','Ophir Road','Bus Stop No.: 01559'],[711,308,690,320,'Raffles Hotel','Bras Basah Road','Bus Stop No.: 02049'],[711,387,690,397,'Pan Pacific Hotel','Raffles Boulevard','Bus Stop No.: 02089'],[711,476,690,477,'Singapore Flyer','End Point','']
];
const CUT = [[34,112,'*lyer'],[20,188,'ue'],[70,208,': 02061'],[42,261,'Drive'],[70,281,': 02029'],[26,337,'eet'],[70,357,': 02031'],[56,413,'n Road'],[70,433,': 05029'],[56,489,'n Road'],[70,509,': 05189']];
const INDEX = [
  ['D',86,569,15,'Golden Mile Complex|Golden Mile Tower|Great World City|HarbourFront Centre|High Street Centre|High Street Plaza|Hilton Shopping Gallery|Hong Lim Complex|IMM Building|International Plaza|Keypoint|Landmark Village Hotel|Liang Court|Liat Towers|Lucky Plaza|Lucky Chinatown'],
  ['D',300,565,15,'Pacific Plaza|Palais Renaissance|Parade Centre|Paragon|Parkway|Park Mall|Pearl’s Centre|People’s Centre|Peninsula Plaza|People’s Park Centre|People’s Park Complex|People’s Park Shopping Centre|Plaza Arcade|Plaza By The Park|Plaza Singapura|Parklane City'],
  ['D',526,557,15,'Tanglin Place|Tanglin Place|Tanglin Mall|Tanglin Shopping Centre|Tekka Centre|The Verge|The Bencoolen|The Centrepoint|The Cathay|The Central|The Riverside|Tudor Court|UE Shopping Mall|Tong Building|VivoCity|Wheelock Place'],
  ['D',724,561,15,'Four Seasons Hotel|Fragrance Hotel Bugis|Furama City Centre|Furama Riverfront|Garden Hotel|Goodwood Park Hotel|Grand Central|Grand Copthorne Waterfront|Grand Hyatt|Grand Park City Hall|Grand Park Orchard|Hangout @ Mt Emily|Hilton|Holiday Inn Atrium|Holiday Inn City Centre|Hotel 1929'],
  ['D',926,561,15,'New Majestic Hotel|Nostalgia Hotel|Novotel Clarke Quay|Orchard Hotel|Orchard Parade Hotel|Oxford Hotel|Pan Pacific Orchard|Pan Pacific Singapore|Park Hotel Clarke Quay|Park Regis|Park Royal Beach Road|Park View|Peninsula Excelsior|Perak Hotel|Porcelain Hotel|RELC International'],
  ['E',118,561,14,'The Quincy Hotel|The Scarlet|  (A Boutique Hotel)|The Regent|The Ritz-Carlton|  Millenia Singapore|The Sultan Hotel|The St Regis|Traders Hotel|Tropical|Victoria Hotel|Wangz Hotel|YMCA International|  House|York Hotel']
];
const GRIDREFS = [['D',27,608,13],['D',248,569,16],['D',482,565,16],['D',668,557,16],['D',894,561,16],['E',82,561,16],['E',253,561,15]];

const svgText = (x, y, t, { size = 4, fill = '#222', weight = 'normal', angle = 0, anchor = 'start' } = {}) =>
  `<text x="${r1(x)}" y="${r1(y)}" font-size="${size}" fill="${fill}" font-weight="${weight}" text-anchor="${anchor}"${angle ? ` transform="rotate(${angle} ${r1(x)} ${r1(y)})"` : ''}>${t.replace('&', '&amp;')}</text>`;

/* Label layout: a label takes the nearest free spot round its own point. */
const pen = document.createElement('canvas').getContext('2d');
const footprint = (x, y, t, size, weight, angle) => {
  pen.font = `${weight} ${size * 10}px "Liberation Sans"`;
  const w = pen.measureText(t).width / 20, a = angle * Math.PI / 180, c = Math.cos(a), s = Math.sin(a);
  const corners = [[-w, -size * .92], [w, -size * .92], [-w, size * .24], [w, size * .24]].map(([u, v]) => [x + u * c - v * s, y + u * s + v * c]);
  const xs = corners.map(p => p[0]), ys = corners.map(p => p[1]);
  return [Math.min(...xs), Math.min(...ys), Math.max(...xs), Math.max(...ys)];
};
const hits = (a, b) => a[0] < b[2] && b[0] < a[2] && a[1] < b[3] && b[1] < a[3];
const SPOTS = [];
for (let dx = -24; dx <= 24; dx += 2) for (let dy = -20; dy <= 20; dy += 2) SPOTS.push([dx, dy]);
SPOTS.sort((a, b) => Math.hypot(...a) - Math.hypot(...b));
const settle = (taken, x, y, t, size, weight, angle, reach) => {
  for (const [dx, dy] of SPOTS) {
    if (Math.hypot(dx, dy) > reach) break;
    const box = footprint(x + dx, y + dy, t, size, weight, angle);
    if (box[0] > 485 && box[1] > 439 && box[2] < 1491 && box[3] < 994 && !taken.some(b => hits(b, box))) {
      taken.push(box);
      return [x + dx, y + dy];
    }
  }
  taken.push(footprint(x, y, t, size, weight, angle));
  return [x, y];
};

const drawMap = () => {
  const roads = ROADS.map(([s, w, p]) => `<path d="${curve(points(s, p))}" stroke-width="${r1(w / 3)}"/>`).join('');
  let grid = '';
  for (let i = 0; i < 27; i++) grid += `M${r1(499 + i * 38.3)},436V1000`;
  for (let i = 0; i < 15; i++) grid += `M484,${r1(446.5 + i * 38.3)}H1492`;
  const marks = Object.entries(MARKS).map(([kind, sheets]) => Object.entries(sheets).map(([s, p]) =>
    points(s, p).map(([x, y]) => `<use href="#${kind}" x="${r1(x)}" y="${r1(y)}"/>`).join('')).join('')).join('');
  const ink = { p: '#5b2d91', k: '#222', r: '#e02b2b' };
  /* kept clear: the service centre disc, the legend, the index, the bay names and the wheel */
  const taken = [[784, 648, 849, 712], [484, 741, 803, 910], [484, 910, 918, 995], [1334, 750, 1387, 763], [1236, 770, 1290, 800], [1455, 632, 1492, 668]];
  const street = STREETS.map(([s, x, y, a, size, t]) => svgText(...settle(taken, ...place(s, x, y), t, size, 'bold', a, 5), t, { size, angle: a, weight: 'bold', anchor: 'middle', fill: '#1d1d1d' })).join('');
  const places = PLACES.map(([s, x, y, k, t, size]) => svgText(...settle(taken, ...place(s, x, y + 5), t, size, 'bold', 0, 24), t, { size, weight: 'bold', anchor: 'middle', fill: ink[k] })).join('');
  const lanes = LANES.map(([s, x, y, a, t]) => svgText(...settle(taken, ...place(s, x, y + 4), t, 4, 'normal', a, 20), t, { size: 4, angle: a, anchor: 'middle', fill: '#666' })).join('');
  const stops = STOPS.map(([x, y, ix, iy, ...rows], i) => {
    const [bx, by] = place('D', ix, iy);
    return `<rect x="${r1(bx - 3.5)}" y="${r1(by - 3.5)}" width="7" height="7" rx="1.4" fill="${i < 4 || i === 15 ? '#2b1b45' : '#6b3a1c'}" stroke="#f08a2c" stroke-width=".8"/><path d="M${r1(bx - 1.5)},${r1(by)}h3" stroke="#ffc98e" stroke-width="1.6"/>` +
      rows.filter(Boolean).map((t, n) => svgText(...place('D', x, y + n * 21), t.replace('*', ''), { size: 6, weight: n === 0 || t[0] === '*' ? 'bold' : 'normal' })).join('');
  }).join('');
  const cut = CUT.map(([x, y, t]) => svgText(...place('D', x, y), t.replace('*', ''), { size: 6, anchor: 'end', weight: t[0] === '*' ? 'bold' : 'normal' })).join('');
  const index = INDEX.map(([s, x, y, step, rows]) => rows.split('|').map((t, n) => svgText(...place(s, x + (t[0] === ' ' ? 8 : 0), y + n * step), t.trim(), { size: 4, fill: '#111' })).join('')).join('');
  const refs = GRIDREFS.map(([s, x, y, rows]) => Array.from({ length: rows }, (_, n) => svgText(...place(s, x, y + n * 15), 'EFGHJLP'[(n * 3 + x) % 7] + (9 + n * 5 % 9), { size: 4, fill: '#333' })).join('')).join('');

  return `<svg viewBox="484 438 1008 557" role="img" aria-label="싱가포르 버스 노선 지도" font-family="Liberation Sans, sans-serif">
<defs>
<linearGradient id="sea" x1="0" x2="1" y1="0" y2="0"><stop offset=".4" stop-color="#9dc4e6"/><stop offset=".8" stop-color="#b9d5ec"/><stop offset="1" stop-color="#c6deef"/></linearGradient>
<linearGradient id="sky" x1="0" x2="0" y1="0" y2="1"><stop stop-color="#3c78bb"/><stop offset=".6" stop-color="#c7a5b4"/><stop offset=".75" stop-color="#805a50"/><stop offset="1" stop-color="#1d4478"/></linearGradient>
<rect id="sq" x="-2" y="-2" width="4" height="4" fill="#f15a24"/>
<path id="tri" d="M0,-2.2L2,1.8H-2z" fill="#e8252b"/>
<path id="star" d="M0,-3L.8,-1L3,-.9L1.3,.5L1.9,2.6L0,1.4L-1.9,2.6L-1.3,.5L-3,-.9L-.8,-1z" fill="#1879c4"/>
<circle id="dot" r="1" fill="#6a3fa0"/>
<g id="mrt"><rect x="-4" y="-4" width="8" height="8" rx="1" fill="#e8253c"/><rect x="-2.4" y="-2.7" width="4.8" height="4.2" rx="1" fill="#fff"/><path d="M-2,3L-1,1.5M2,3L1,1.5" stroke="#fff"/></g>
<path id="plus" d="M-1.4,-4h2.8v2.6H4v2.8H1.4V4h-2.8V1.400H-4v-2.800h2.600z" fill="#1b5cb5"/>
<g id="info"><path d="M0,-5L5,0L0,5L-5,0z" fill="#138570"/><path d="M2,-2.500Q-2,-2 -1.500,0Q-1,2 2,2.500" fill="none" stroke="#fff" stroke-width="1.300"/></g>
<g id="bus"><path d="M-9,-5L-3,-8L8,-5L9,3L-2,6L-9,3z" fill="#4d4a45"/><path d="M-9,-5L-3,-8V0L-9,2z" fill="#8fb3c2"/><path d="M-8,1L-3,-1V4L-8,5z" fill="#2d7676"/><path d="M-1,-6L7,-4V-2L-1,-3z" fill="#e5b63e"/><path d="M-1,-2L7,-1V1L-1,1z" fill="#6b92bf"/><path d="M-7,-7L-3,-9L0,-7L-3,-5z" fill="#f4f1e4"/><path d="M0,3L7,2" stroke="#d0a23c" stroke-width="1.500"/><circle cx="-5" cy="5" r="1.500" fill="#222"/><rect x="2" y="3" width="6" height="6" rx="1" fill="#27205a" stroke="#c06a20" stroke-width=".7"/><path d="M4,6h2" stroke="#f7b16b" stroke-width="1.500"/></g>
<path id="kris" d="M-1,-9L4,-5L5,-1L2,3L7,7H-6Q-5,3 -1,2Q-5,0 -3,-3Q0,-3 -1,-9z" fill="#f7a12a"/>
</defs>
<rect x="484" y="438" width="1008" height="557" fill="#cdd7bf"/>
${AREAS.map(([s, c, p]) => `<path d="${line(points(s, p))}z" fill="${c}"/>`).join('')}
<g fill="none" stroke="#8fb7dc" stroke-linecap="round">${WATER.map(([s, w, p]) => `<path d="${curve(points(s, p))}" stroke-width="${r1(w / 3)}"/>`).join('')}</g>
<g fill="none" stroke="#cfd0c9">${HIGHWAY.map(([s, w, p]) => `<path d="${curve(points(s, p))}" stroke-width="${r1(w / 3)}"/>`).join('')}</g>
<g fill="none" stroke="#8d9080" stroke-opacity=".45" transform="translate(.8 1)">${roads}</g>
<g fill="none" stroke="#fff" stroke-linejoin="round">${roads}</g>
<path d="${grid}" stroke="#f8d9ae" stroke-opacity=".6" stroke-width=".8"/>
${lanes}
<g fill="none" stroke="#f7941d" stroke-linejoin="round">${ROUTES.map(([s, w, p]) => `<path d="${line(points(s, p))}" stroke-width="${r1(w / 3)}"/>`).join('')}</g>
<g fill="#fff">${[['A',220,335,60],['A',300,450,55],['A',535,533,0],['A',160,370,70],['A',247,550,65],['A',430,714,190],['A',755,605,-35],['A',590,790,-30],['A',798,500,5],['B',22,522,5],['B',458,537,-5],['B',755,512,-5],['B',930,175,-85],['C',185,95,-40],['C',390,145,-75],['C',342,310,-75],['C',735,712,-12],['E',130,232,40],['E',645,305,-25],['E',798,165,-70],['F',185,235,-78],['F',105,180,-68],['F',122,545,-80],['D',988,38,55]].map(([s, x, y, a]) => `<path d="M-5,-1L1,-1V-2.500L6,0L1,2.500V1H-5z" transform="translate(${place(s, x, y).map(r1)}) rotate(${a})"/>`).join('')}</g>
${street}${marks}${places}
${svgText(1360.5, 760, 'MARINA BAY', { size: 8, weight: 'bold', anchor: 'middle', fill: '#31479b' })}
<path id="river" d="M1240,775Q1254,795 1290,794" fill="none"/><text font-size="5" font-weight="bold" fill="#31479b"><textPath href="#river">SINGAPORE RIVER</textPath></text>
<path d="M800,615L816,650" stroke="#8e98ba"/><circle cx="816.500" cy="680" r="32.500" fill="#071c5c"/><use href="#kris" x="818" y="661"/>
${['Singapore Airlines Service Centre', '2, Orchard Turn, ION Orchard', '#04-05, Singapore 238801', 'Opening hours:', 'Mon-Fri: 8am - 5pm', 'Sat: 8am - 1pm'].map((t, i) => svgText(816.5, 674 + i * 5 + (i > 2 ? 3 : 0), t, { size: i ? 4 : 3, fill: '#fff', weight: 'bold', anchor: 'middle' })).join('')}
<path d="M1445,648L1458,648" stroke="#4d94cb"/><circle cx="1473.500" cy="650" r="17.500" fill="url(#sky)" stroke="#3f7fb8"/><ellipse cx="1473" cy="647" rx="8" ry="11" fill="none" stroke="#dceaf7"/><path d="M1460,658h27M1464,656v6M1469,654v8M1477,655v7M1483,656v5" stroke="#e4a274" stroke-width="1.500"/>
<path d="M484,741H803V910H918V995H484z" fill="#fff"/>
<rect x="484" y="745" width="316.500" height="159" fill="#d9e4ee"/><rect x="484" y="905" width="316.500" height="3.500" fill="#06165a"/>
<rect x="484" y="745" width="67" height="12.500" fill="#071c5c"/><rect x="504" y="746" width="28" height="10.500" rx="1" fill="#f89b22"/>
${svgText(485, 754, 'Stops', { size: 6, fill: '#fff', weight: 'bold' })}${svgText(505, 753, 'SIA', { size: 5, fill: '#222', weight: 'bold' })}${svgText(515, 753, 'Hop-on', { size: 4, fill: '#e02b2b', weight: 'bold' })}
<path d="M538,747L541,750L541,753L544,755H534Q536,752 538,752z" fill="#f7a12a"/>
${stops}${cut}
<rect x="484" y="912" width="236" height="83" fill="#fdecd9"/><rect x="724" y="912" width="193.500" height="83" fill="#e6deee"/>
<path d="M484,912H500V922Q500,925 497,925H484z" fill="#ee5a28"/><path d="M484,919h5" stroke="#fff" stroke-width="2"/>
${index}${refs}
<rect x="859" y="987" width="58.500" height="8" fill="#808080"/><path d="M861,995Q861,988 868,989L865,995z" fill="#19a08a"/>${svgText(871, 993, 'Singapore', { size: 5, fill: '#fff', weight: 'bold' })}
</svg>`;
};

define('city-map', `
<style>
:host { display: block; }
figure { margin: 0; }
figure svg { display: block; width: 100%; height: auto; }
</style>
<figure></figure>`, root => { root.querySelector('figure').innerHTML = drawMap(); });

/* ---------- page ---------- */
define('explorer-page', `
<style>
:host { display: block; }
h1 { margin: 0; padding: 20px 0 31px 28px; font-size: 21px; line-height: 28px; font-weight: normal; color: #666; }
main { display: grid; grid-template-columns: 456px minmax(0, 1fr); gap: 5px; padding: 0 12px 29px 23px; }
section { display: flex; flex-direction: column; gap: 43px; }
price-table { margin-left: 18px; }
</style>
<tab-strip>
<tab-link divided>싱가포르 스톱오버 프리미엄</tab-link>
<tab-link>싱가포르 스톱오버 홀리데이</tab-link>
<tab-link current>싱가포르 익스플로러 패스</tab-link>
<tab-link>SIA 홀리데이</tab-link>
</tab-strip>
<h1>싱가포르 익스플로러 패스</h1>
<main>
<attraction-list></attraction-list>
<section>
<price-table></price-table>
<city-map></city-map>
</section>
</main>`);
</script>
</body>
</html>
